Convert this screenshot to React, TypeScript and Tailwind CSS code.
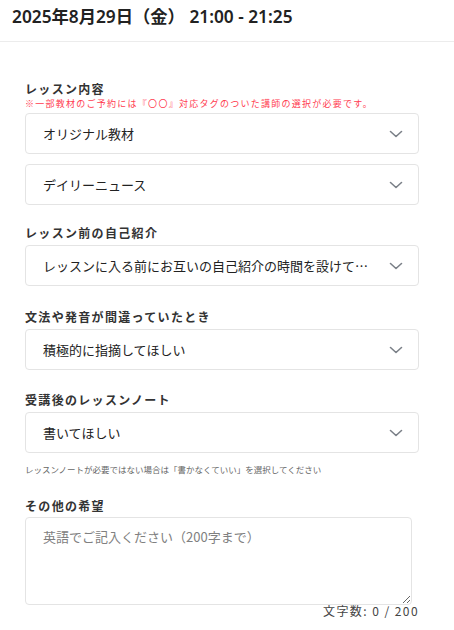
import * as React from 'react';

const latin = { fontFamily: '"Noto Sans", "Noto Sans CJK JP", sans-serif' };
const jp = { fontFamily: '"Noto Sans CJK JP", "Noto Sans", sans-serif' };

function Chevron() {
  return (
    <svg width="14" height="8" viewBox="0 0 14 8" fill="none" stroke="#7b8088" strokeWidth="1.6" strokeLinecap="round" strokeLinejoin="round">
      <path d="M1.5 1.5l5.5 5 5.5-5" />
    </svg>
  );
}

function Label({ children }: { children: React.ReactNode }) {
  return <div className="h-[18px] text-[12px] font-bold leading-[18px] tracking-[0.11em] text-[#333]">{children}</div>;
}

function Select({ value }: { value: string }) {
  return (
    <div className="flex h-[41px] items-center justify-between rounded-[4px] border border-[#e4e4e4] bg-white pl-[17px] pr-[15px]">
      <span className="truncate text-[13px] leading-[20px] text-[#222]">{value}</span>
      <span className="ml-[16px] flex flex-none items-center">
        <Chevron />
      </span>
    </div>
  );
}

export default function App() {
  return (
    <div className="h-[630px] w-[454px] bg-white" style={jp}>
      <div className="flex h-[42px] items-center border-b border-[#ececec] px-3 pb-[8px]" style={latin}>
        <h1 className="text-[17.3px] font-semibold text-[#222]">2025年8月29日（金） 21:00 - 21:25</h1>
      </div>

      <div className="px-[25px] pt-[38px]">
        <div>
          <Label>レッスン内容</Label>
          <div className="h-[12px] text-[9px] leading-[12px] tracking-[0.14em] text-[#ff3c50]">
            ※一部教材のご予約には『〇〇』対応タグのついた講師の選択が必要です。
          </div>
          <div className="mt-[3px] flex flex-col gap-[10px] pr-[10px]">
            <Select value="オリジナル教材" />
            <Select value="デイリーニュース" />
          </div>
        </div>

        <div className="mt-[19px]">
          <Label>レッスン前の自己紹介</Label>
          <div className="mt-[3px] pr-[10px]">
            <Select value="レッスンに入る前にお互いの自己紹介の時間を設けてほしい" />
          </div>
        </div>

        <div className="mt-[22px]">
          <Label>文法や発音が間違っていたとき</Label>
          <div className="mt-[3px] pr-[10px]">
            <Select value="積極的に指摘してほしい" />
          </div>
        </div>

        <div className="mt-[21px]">
          <Label>受講後のレッスンノート</Label>
          <div className="mt-[3px] pr-[10px]">
            <Select value="書いてほしい" />
          </div>
          <div className="mt-[10px] h-[12px] text-[8.5px] leading-[12px] text-[#666]">
            レッスンノートが必要ではない場合は「書かなくていい」を選択してください
          </div>
        </div>

        <div className="mt-[22px]">
          <Label>その他の希望</Label>
          <div className="mt-[2px] pr-[17px]">
            <textarea
              className="block h-[88px] w-full resize-y rounded-[4px] border border-[#e4e4e4] px-[17px] py-[9px] text-[13px] leading-[20px] text-[#222] outline-none placeholder:text-[#808080]"
              placeholder="英語でご記入ください（200字まで）"
              style={jp}
            />
          </div>
          <div className="-mt-[1px] h-[14px] pr-[10px] text-right text-[12px] leading-[14px] tracking-[0.12em] text-[#444]">文字数: 0 / 200</div>
        </div>
      </div>
    </div>
  );
}
